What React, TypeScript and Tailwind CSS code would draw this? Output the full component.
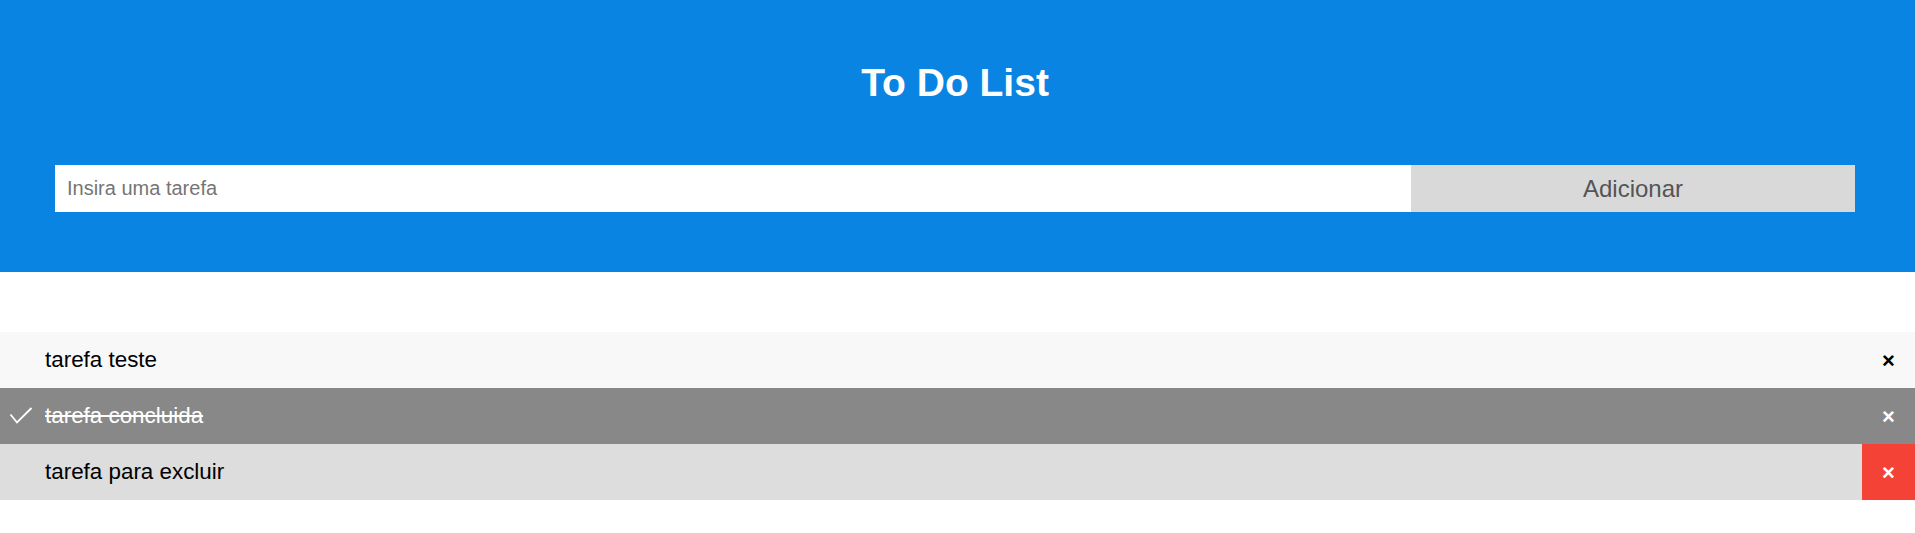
import React, { useState } from 'react';

type Task = { id: number; text: string; done: boolean };

const CheckMark: React.FC = () => (
    <svg width="24" height="18" viewBox="0 0 24 18" className="absolute left-[9px] top-1/2 -translate-y-1/2">
        <polyline points="1.5,7.5 8,15.5 22.5,1" fill="none" stroke="#ffffff" strokeWidth="1.8" />
    </svg>
);

const App: React.FC = () => {
    const [value, setValue] = useState<string>('');
    const [tasks, setTasks] = useState<Task[]>([
        { id: 1, text: 'tarefa teste', done: false },
        { id: 2, text: 'tarefa concluida', done: true },
        { id: 3, text: 'tarefa para excluir', done: false },
    ]);

    const addTask = () => {
        if (!value.trim()) return;
        setTasks(prev => [...prev, { id: Date.now(), text: value, done: false }]);
        setValue('');
    };

    const toggle = (id: number) =>
        setTasks(prev => prev.map(t => (t.id === id ? { ...t, done: !t.done } : t)));

    const remove = (id: number) => setTasks(prev => prev.filter(t => t.id !== id));

    return (
        <div className="min-h-screen bg-white font-['Liberation_Sans',Arial,sans-serif]">
            {/* cabeçalho */}
            <div className="bg-[#0984e3] pt-[63px] pb-[60px] pl-[55px] pr-[60px] text-center text-white">
                <h2 className="text-[39px] font-bold leading-none">To Do List</h2>
                <div className="mt-[63px] flex h-[47px]">
                    <input
                        value={value}
                        onChange={e => setValue(e.target.value)}
                        placeholder="Insira uma tarefa"
                        className="h-full w-[1356px] bg-white px-[12px] text-[20px] text-black outline-none placeholder:text-[#757575]"
                    />
                    <button
                        onClick={addTask}
                        className="h-full flex-1 bg-[#d9d9d9] text-[24px] text-[#555555]"
                    >
                        Adicionar
                    </button>
                </div>
            </div>

            {/* lista */}
            <ul className="mt-[60px]">
                {tasks.map((t, i) => {
                    const isLast = i === 2;
                    let rowBg = i % 2 === 0 ? 'bg-[#f8f8f8]' : 'bg-[#eeeeee]';
                    if (t.done) rowBg = 'bg-[#888888]';
                    else if (isLast) rowBg = 'bg-[#dddddd]';
                    return (
                        <li
                            key={t.id}
                            onClick={() => toggle(t.id)}
                            className={`relative flex h-[56px] cursor-pointer items-center pl-[45px] text-[22.4px] ${rowBg} ${t.done ? 'text-white line-through' : 'text-black'}`}
                        >
                            {t.done && <CheckMark />}
                            <span>{t.text}</span>
                            <span
                                onClick={e => {
                                    e.stopPropagation();
                                    remove(t.id);
                                }}
                                className={`absolute right-0 top-0 flex h-full w-[53px] items-center justify-center text-[22px] font-bold no-underline ${isLast ? 'bg-[#f44336] text-white' : t.done ? 'text-white' : 'text-black'}`}
                            >
                                ×
                            </span>
                        </li>
                    );
                })}
            </ul>
        </div>
    );
};

export default App;
